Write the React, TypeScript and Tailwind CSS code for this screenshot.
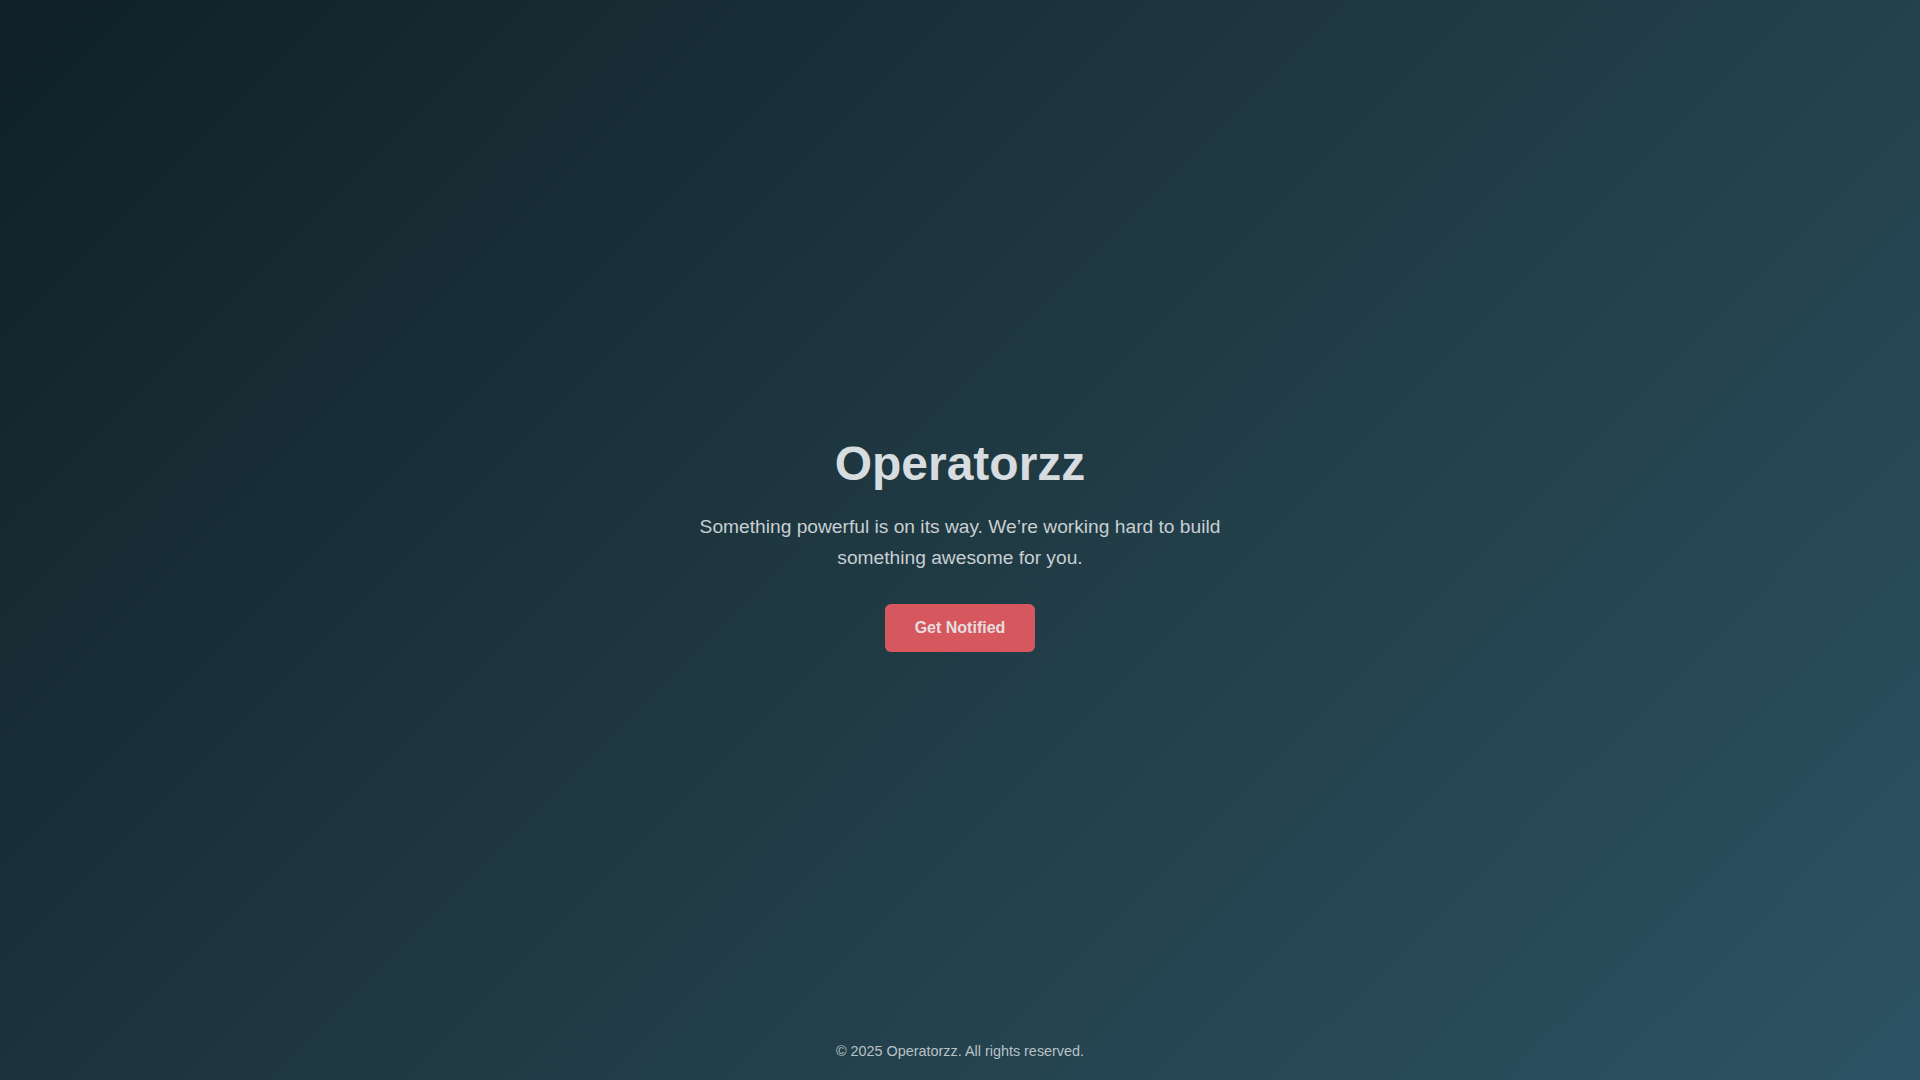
export default function App() {
  return (
    <div className="flex min-h-screen flex-col bg-[linear-gradient(135deg,#0f2027,#203a43,#2c5364)] font-['Liberation_Sans',Arial,sans-serif]">
      <main className="flex flex-1 items-center justify-center pt-[46px] text-center">
        <div className="flex flex-col items-center">
          <h1 className="mb-[19px] text-5xl leading-[1.2] font-bold text-[#d6dcdf]">Operatorzz</h1>
          <p className="mb-[30px] max-w-[540px] text-[19.2px] leading-[1.6] text-[#c8cfd2]">
            Something powerful is on its way. We’re working hard to build something awesome for you.
          </p>
          <button className="rounded-md bg-[#d6585e] px-[30px] py-3 text-base leading-6 font-bold text-[#e6dede]">
            Get Notified
          </button>
        </div>
      </main>
      <footer className="pb-[19px] text-center text-[14.4px] leading-5 text-[#b9c2c7]">
        © 2025 Operatorzz. All rights reserved.
      </footer>
    </div>
  )
}
